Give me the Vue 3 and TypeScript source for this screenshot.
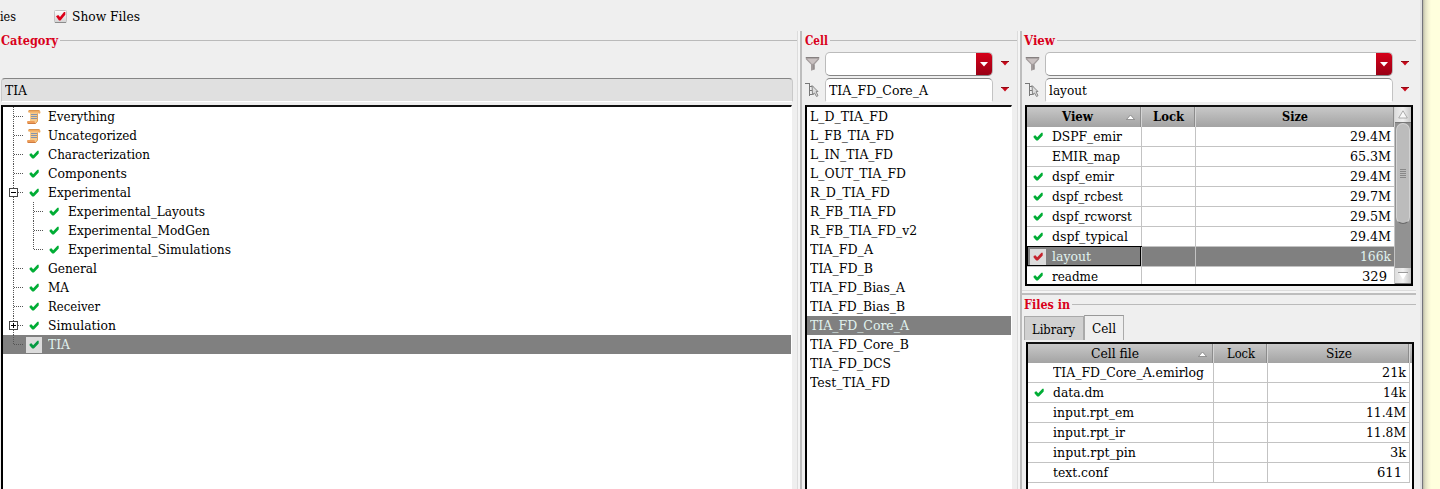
<script setup lang="ts">
interface TreeNode { name: string; width: number; depth: number; icon: 'scroll' | 'check'; toggle?: '-' | '+'; last?: boolean; selected?: boolean }
interface ListItem { name: string; width: number }
interface FileRow { name: string; width: number; size: string; sizeWidth: number; check?: boolean; selected?: boolean; inset?: number }

const tree: TreeNode[] = [
  { name: 'Everything', width: 67, depth: 0, icon: 'scroll' },
  { name: 'Uncategorized', width: 89, depth: 0, icon: 'scroll' },
  { name: 'Characterization', width: 102, depth: 0, icon: 'check' },
  { name: 'Components', width: 79, depth: 0, icon: 'check' },
  { name: 'Experimental', width: 83, depth: 0, icon: 'check', toggle: '-' },
  { name: 'Experimental_Layouts', width: 137, depth: 1, icon: 'check' },
  { name: 'Experimental_ModGen', width: 142, depth: 1, icon: 'check' },
  { name: 'Experimental_Simulations', width: 163, depth: 1, icon: 'check', last: true },
  { name: 'General', width: 49, depth: 0, icon: 'check' },
  { name: 'MA', width: 21, depth: 0, icon: 'check' },
  { name: 'Receiver', width: 52, depth: 0, icon: 'check' },
  { name: 'Simulation', width: 68, depth: 0, icon: 'check', toggle: '+' },
  { name: 'TIA', width: 22, depth: 0, icon: 'check', last: true, selected: true },
]

const cells: ListItem[] = [
  { name: 'L_D_TIA_FD', width: 78 },
  { name: 'L_FB_TIA_FD', width: 84 },
  { name: 'L_IN_TIA_FD', width: 83 },
  { name: 'L_OUT_TIA_FD', width: 96 },
  { name: 'R_D_TIA_FD', width: 80 },
  { name: 'R_FB_TIA_FD', width: 86 },
  { name: 'R_FB_TIA_FD_v2', width: 107 },
  { name: 'TIA_FD_A', width: 63 },
  { name: 'TIA_FD_B', width: 63 },
  { name: 'TIA_FD_Bias_A', width: 95 },
  { name: 'TIA_FD_Bias_B', width: 95 },
  { name: 'TIA_FD_Core_A', width: 99 },
  { name: 'TIA_FD_Core_B', width: 99 },
  { name: 'TIA_FD_DCS', width: 81 },
  { name: 'Test_TIA_FD', width: 80 },
]
const currentCell = 'TIA_FD_Core_A'

const views: FileRow[] = [
  { name: 'DSPF_emir', width: 70, size: '29.4M', sizeWidth: 41, check: true },
  { name: 'EMIR_map', width: 68, size: '65.3M', sizeWidth: 41 },
  { name: 'dspf_emir', width: 62, size: '29.4M', sizeWidth: 41, check: true },
  { name: 'dspf_rcbest', width: 71, size: '29.7M', sizeWidth: 41, check: true },
  { name: 'dspf_rcworst', width: 80, size: '29.5M', sizeWidth: 41, check: true },
  { name: 'dspf_typical', width: 76, size: '29.4M', sizeWidth: 41, check: true },
  { name: 'layout', width: 39, size: '166k', sizeWidth: 31, check: true, selected: true },
  { name: 'readme', width: 46, size: '329', sizeWidth: 25, check: true, inset: 4 },
]

const files: FileRow[] = [
  { name: 'TIA_FD_Core_A.emirlog', width: 151, size: '21k', sizeWidth: 24 },
  { name: 'data.dm', width: 51, size: '14k', sizeWidth: 23 },
  { name: 'input.rpt_em', width: 81, size: '11.4M', sizeWidth: 40 },
  { name: 'input.rpt_ir', width: 72, size: '11.8M', sizeWidth: 40 },
  { name: 'input.rpt_pin', width: 83, size: '3k', sizeWidth: 16 },
  { name: 'text.conf', width: 55, size: '611', sizeWidth: 25, inset: 4 },
]
files[1].check = true

// Stretches a label so that it fills the given width in pixels.
const vFit = {
  mounted(el: HTMLElement, binding: { value: number }) {
    const natural = el.getBoundingClientRect().width
    if (natural > 0) {
      el.style.width = `${binding.value}px`
      el.style.transform = `scaleX(${binding.value / natural})`
    }
  },
}
</script>

<template>
  <div class="screen">
    <main class="window">
      <div class="options">
        <span v-fit="16" class="t">ies</span>
        <svg class="checkbox" width="13" height="13" viewBox="0 0 13 13">
          <defs>
            <linearGradient id="cb" x1="0" y1="0" x2="0" y2="1"><stop offset="0" stop-color="#fff" /><stop offset="1" stop-color="#d2d2d2" /></linearGradient>
          </defs>
          <rect x=".5" y=".5" width="12" height="12" rx="1" fill="url(#cb)" stroke="#c4c4c4" />
          <path d="M1 12.5h11" stroke="#8c8c8c" />
          <path d="M2 6.2 4.2 5 6 7 10 2h1.3v2.7L6.5 10.4H5Z" fill="#dc0019" />
        </svg>
        <span v-fit="68" class="t">Show Files</span>
      </div>
      <div class="panes">
        <section class="pane category">
          <div class="legend"><b v-fit="57" class="t">Category</b><i /></div>
          <div class="readonly"><span v-fit="22" class="t">TIA</span></div>
          <div class="box tree">
            <div v-for="n in tree" :key="n.name" class="node" :class="{ selected: n.selected }">
              <svg class="lines" :width="n.depth ? 43 : 23" height="19">
                <path v-if="!(n.last && !n.depth)" class="dots" d="M10.5 0V19" />
                <path v-else class="dots" d="M10.5 0V9" />
                <path v-if="!n.depth" class="dots" d="M11 9.5H20" />
                <template v-else>
                  <path class="dots" :d="n.last ? 'M30.5 0V9' : 'M30.5 0V19'" />
                  <path class="dots" d="M31 9.5H40" />
                </template>
                <g v-if="n.toggle">
                  <rect x="6.5" y="5.5" width="8" height="8" fill="#fff" stroke="#444" />
                  <path :d="n.toggle === '-' ? 'M8 9.5h5' : 'M8 9.5h5M10.5 7v5'" stroke="#000" />
                </g>
              </svg>
              <span class="icon">
                <svg v-if="n.icon === 'check'" width="16" height="16" viewBox="0 0 16 16"><path d="M3.6 7 5.4 6.2 7.2 8.2 11.4 3.800h1.300v2.600L7.9 11.400H6.300L3.600 8.600Z" :fill="n.selected ? '#079b43' : '#00ad35'" /></svg>
                <svg v-else width="16" height="16" viewBox="0 0 16 16">
                  <path d="M4 2.500h8V12l-2 2.500H2.500L4 11.500Z" fill="#f7cb8b" />
                  <path d="M11.500 4.500V12l-1.500 2" stroke="#dfa05a" fill="none" />
                  <path d="M2.500 1.500H13q1.700.3 1.500 2Q14.200 5 12.500 4.600L12 3.600H4.200Q2.300 4 2 2.500Z" fill="#efac63" />
                  <path d="M2.800 1.500H13.500" stroke="#d99550" />
                  <path d="M1.500 12H8.500q0 2 1.800 2.600L9 15H2.500Q.8 14.800 1 13Z" fill="#ee9d58" />
                  <path d="M1.800 14.500H9.500" stroke="#cf7c41" />
                  <path d="M5 5.500h6M5 7.500h6M5 9.500h6" stroke="#8394ae" />
                </svg>
              </span>
              <span v-fit="n.width" class="t">{{ n.name }}</span>
            </div>
          </div>
        </section>

        <div class="split" />

        <section class="pane cell">
          <div class="legend"><b v-fit="23" class="t">Cell</b><i /></div>
          <div class="filter">
            <svg class="tool" width="16" height="16" viewBox="0 0 16 16"><path d="M.8 1.500h13.400v1.800L9.500 8.500v5L6 14.800V8.500L.8 3.300Z" fill="#a39c9c" /><path d="M2 2.700h11L8.500 7.500 7 8Z" fill="#c9c1c1" /><path d="M.8 1.500h13.400M9 8.500v5" stroke="#858080" fill="none" /></svg>
            <div class="combo"><span class="drop"><svg width="8" height="5"><path d="M0 0h8L4 4.500Z" fill="#fff" /></svg></span></div>
            <svg class="arrow" width="8" height="5"><path d="M0 0h8L4 4.500Z" fill="#c9081a" /><path d="M0 .5h8" stroke="#930b14" /></svg>
          </div>
          <div class="filter second">
            <svg class="tool" width="16" height="16" viewBox="0 0 16 16"><path d="M0 1.500h4M4.500 1v13M4.500 8.500h4M4.500 12.500h4M5 4.500h3v8" stroke="#777" fill="none" /><path d="m7 3.500 6 6-2 .2 2 4-1.500.8-2-3.500-2 1.500Z" fill="#ddd" stroke="#888" /></svg>
            <div class="field"><span v-fit="99" class="t">{{ currentCell }}</span></div>
            <svg class="arrow" width="8" height="5"><path d="M0 0h8L4 4.500Z" fill="#c9081a" /><path d="M0 .5h8" stroke="#930b14" /></svg>
          </div>
          <div class="box list">
            <div v-for="c in cells" :key="c.name" class="item" :class="{ selected: c.name === currentCell }"><span v-fit="c.width" class="t">{{ c.name }}</span></div>
          </div>
        </section>

        <div class="split" />

        <section class="pane right">
          <div class="legend"><b v-fit="31" class="t">View</b><i /></div>
          <div class="filter">
            <svg class="tool" width="16" height="16" viewBox="0 0 16 16"><path d="M.8 1.500h13.400v1.800L9.500 8.500v5L6 14.800V8.500L.8 3.300Z" fill="#a39c9c" /><path d="M2 2.700h11L8.500 7.500 7 8Z" fill="#c9c1c1" /><path d="M.8 1.500h13.400M9 8.500v5" stroke="#858080" fill="none" /></svg>
            <div class="combo"><span class="drop"><svg width="8" height="5"><path d="M0 0h8L4 4.500Z" fill="#fff" /></svg></span></div>
            <svg class="arrow" width="8" height="5"><path d="M0 0h8L4 4.500Z" fill="#c9081a" /><path d="M0 .5h8" stroke="#930b14" /></svg>
          </div>
          <div class="filter second">
            <svg class="tool" width="16" height="16" viewBox="0 0 16 16"><path d="M0 1.500h4M4.500 1v13M4.500 8.500h4M4.500 12.500h4M5 4.500h3v8" stroke="#777" fill="none" /><path d="m7 3.500 6 6-2 .2 2 4-1.500.8-2-3.500-2 1.500Z" fill="#ddd" stroke="#888" /></svg>
            <div class="field"><span v-fit="38" class="t">layout</span></div>
            <svg class="arrow" width="8" height="5"><path d="M0 0h8L4 4.500Z" fill="#c9081a" /><path d="M0 .5h8" stroke="#930b14" /></svg>
          </div>
          <div class="box views">
            <div class="table">
              <div class="row head bold">
                <div class="th"><span v-fit="31" class="t">View</span><svg class="sort" width="9" height="6"><path d="M.5 5.500 4.500 1 8.500 5.500Z" fill="#fff" stroke="#777" stroke-width=".7" /></svg></div>
                <div class="th"><span v-fit="31" class="t">Lock</span></div>
                <div class="th"><span v-fit="26" class="t">Size</span></div>
              </div>
              <div v-for="v in views" :key="v.name" class="row" :class="{ selected: v.selected }">
                <div class="td name">
                  <span class="icon"><svg v-if="v.check" width="16" height="16" viewBox="0 0 16 16"><path d="M3.6 7 5.4 6.2 7.2 8.2 11.4 3.800h1.300v2.600L7.9 11.400H6.300L3.600 8.600Z" :fill="v.selected ? '#c5222c' : '#00ad35'" /></svg></span>
                  <span v-fit="v.width" class="t">{{ v.name }}</span>
                </div>
                <div class="td" />
                <div class="td size" :class="{ inset: v.inset }"><span v-fit="v.sizeWidth" class="t">{{ v.size }}</span></div>
              </div>
            </div>
            <div class="scroll">
              <div class="sbtn up"><svg width="10" height="9"><path d="M.7 8 5 .8 9.300 8Z" fill="#f8f8f8" stroke="#999" stroke-width=".8" /></svg></div>
              <div class="track"><div class="thumb"><i /><i /><i /><i /><i /></div></div>
              <div class="sbtn"><svg width="10" height="8"><path d="M.7 .5H9.300L5 7.500Z" fill="#fff" /><path d="M0 .5h10" stroke="#999" /></svg></div>
            </div>
          </div>
          <div class="hsplit" />
          <div class="legend files-in"><b v-fit="46" class="t">Files in</b><i /></div>
          <div class="tabs">
            <div class="tab lib"><span v-fit="43" class="t">Library</span></div>
            <div class="tab active"><span v-fit="24" class="t">Cell</span></div>
          </div>
          <div class="box files">
            <div class="table">
              <div class="row head">
                <div class="th"><span v-fit="48" class="t">Cell file</span><svg class="sort" width="9" height="6"><path d="M.5 5.500 4.500 1 8.500 5.500Z" fill="#fff" stroke="#777" stroke-width=".7" /></svg></div>
                <div class="th"><span v-fit="28" class="t">Lock</span></div>
                <div class="th"><span v-fit="26" class="t">Size</span></div>
              </div>
              <div v-for="f in files" :key="f.name" class="row">
                <div class="td name">
                  <span class="icon"><svg v-if="f.check" width="16" height="16" viewBox="0 0 16 16"><path d="M3.6 7 5.4 6.2 7.2 8.2 11.4 3.800h1.300v2.600L7.9 11.400H6.300L3.600 8.600Z" fill="#00ad35" /></svg></span>
                  <span v-fit="f.width" class="t">{{ f.name }}</span>
                </div>
                <div class="td" />
                <div class="td size" :class="{ inset: f.inset }"><span v-fit="f.sizeWidth" class="t">{{ f.size }}</span></div>
              </div>
            </div>
          </div>
        </section>
      </div>
    </main>
    <div class="edge" />
  </div>
</template>

<style>
html, body { margin: 0; overflow: hidden; }
</style>

<style scoped>
.screen { display: flex; width: 1440px; height: 489px; overflow: hidden; background: #ffffdd; color: #000; font: 13px/19px "DejaVu Serif Condensed", "DejaVu Serif", serif; font-stretch: condensed; }
.screen * { box-sizing: border-box; }
.t { display: inline-block; white-space: pre; flex: none; transform-origin: 0 50%; }
svg { display: block; flex: none; }
.window { width: 1423px; height: 489px; flex: none; background: #efefef; border-right: 1px solid #74747c; box-shadow: inset -2px 0 #e2e2e2; }
.edge { width: 17px; background: linear-gradient(90deg, #b8b8a4, #deddc2 2px, #f3f2d2 5px, #ffffdd 8px); }
.options { display: flex; height: 31px; align-items: center; padding-top: 2px; }
.checkbox { margin: 0 5px 0 38px; }
.panes { display: flex; height: 458px; }
.pane { display: flex; flex-direction: column; flex: none; height: 458px; }
.category { width: 797px; }
.cell { width: 215px; padding-left: 3px; }
.right { width: 394px; padding-left: 2px; }
.split { width: 5px; flex: none; background: linear-gradient(90deg, #dcdcdc 1px, #f5f5f5 1px, #f5f5f5 3px, #bdbdbd 3px); }
.legend { display: flex; flex: none; align-items: center; gap: 2px; height: 19px; color: #d9001b; font-size: 13px; }
.legend i { flex: 1; height: 1px; background: #bababa; }
.category .legend { padding-left: 1px; }
.readonly { flex: none; height: 24px; width: 792px; margin: 28px 0 0 1px; padding: 2px 3px; background: #e0e0e0; border: 1px solid #c9c9c9; border-top: 1px solid #858585; border-bottom-color: #fff; border-radius: 4px 4px 0 0; }
.box { background: #fff; border: 2px solid #000; border-top-color: #111; }
.tree { width: 791px; margin: 3px 0 0 1px; flex: 1; border-right: 1px solid #fff; border-bottom: 0; }
.node { display: flex; height: 19px; align-items: center; }
.icon { width: 16px; height: 16px; flex: none; }
.node .icon { margin-right: 6px; }
.lines { overflow: visible; }
.dots { stroke: #555; stroke-dasharray: 1 1; fill: none; }
.selected { background: #808080; color: #e0f3ef; }
.selected .icon { background: #dcdcdc; }
.filter { display: flex; flex: none; height: 24px; margin-top: 2px; align-items: center; }
.second { margin-top: 2px; }
.tool { width: 16px; margin-right: 4px; }
.right .tool { margin-left: 1px; }
.combo { flex: 1; height: 24px; border: 1px solid #bbb; border-bottom: 1px solid #868686; border-radius: 5px; background: #fff; overflow: hidden; display: flex; justify-content: flex-end; }
.drop { width: 16px; height: 23px; background: linear-gradient(#d60019, #960015); display: flex; align-items: center; justify-content: center; }
.field { flex: 1; height: 24px; padding: 2px 3px; border: 1px solid #c3c3c3; border-top-color: #858585; border-bottom-color: #fff; border-radius: 5px 5px 2px 2px; background: #fff; }
.arrow { margin: 0 8px 2px 8px; }
.right .arrow { margin-right: 7px; }
.list { width: 207px; flex: 1; margin-top: 3px; border-right: 1px solid #fff; border-bottom: 0; }
.item { height: 19px; padding-left: 3px; }
.views { display: flex; flex: none; width: 388px; height: 181px; margin: 3px 0 0 1px; overflow: hidden; }
.table { flex: none; }
.row { display: grid; height: 20px; }
.views .row { grid-template-columns: 115px 54px 199px; }
.files .row { grid-template-columns: 186px 54px 142px; }
.head { background: linear-gradient(#c8c8c8, #a3a3a3); height: 20px; }
.files .head { height: 19px; }
.bold { font-weight: bold; }
.th { display: flex; justify-content: center; position: relative; border-right: 1px solid #d5d5d5; box-shadow: inset -1px 0 #8c8c8c; }
.sort { position: absolute; right: 6px; top: 7px; }
.views .th:first-child { padding-right: 14px; }
.files .th:first-child { padding-right: 11px; }
.td { display: flex; align-items: center; border-right: 1px solid #c3c3c3; border-bottom: 1px solid #c3c3c3; }
.name { padding-left: 3px; gap: 6px; }
.size { justify-content: flex-end; padding-right: 3px; }
.inset { padding-right: 7px; }
.views .selected .name { box-shadow: 0 -1px #000, inset -1px -1px #000, inset 1px 0 #000; }
.scroll { width: 16px; display: flex; flex-direction: column; }
.sbtn { height: 16px; flex: none; display: flex; align-items: center; justify-content: center; background: linear-gradient(90deg, #ddd, #f0f0f0, #c6c6c6); border-bottom: 1px solid #777; }
.track { flex: 1; background: #929292; }
.thumb { height: 101px; margin: 0 1px; background: #bcbcbc; border: 1px solid #d2d2d2; border-bottom: 1px solid #666; border-radius: 8px; display: flex; flex-direction: column; align-items: center; justify-content: center; gap: 1px; }
.thumb i { width: 6px; height: 1px; background: #888; }
.hsplit { height: 5px; flex: none; margin: 4px 0 0 -2px; background: linear-gradient(#dcdcdc 1px, #f5f5f5 1px, #f5f5f5 3px, #bdbdbd 3px); }
.tabs { display: flex; flex: none; height: 25px; margin-top: 1px; align-items: flex-end; }
.tab { border: 1px solid #aaa; border-bottom: 0; height: 25px; padding: 3px 7px; }
.lib { width: 60px; background: #d0d0d0; height: 24px; }
.active { width: 40px; border-top-color: #999; }
.files { flex: 1; width: 388px; margin: 2px 0 0 2px; border-bottom: 0; overflow: hidden; }
</style>
